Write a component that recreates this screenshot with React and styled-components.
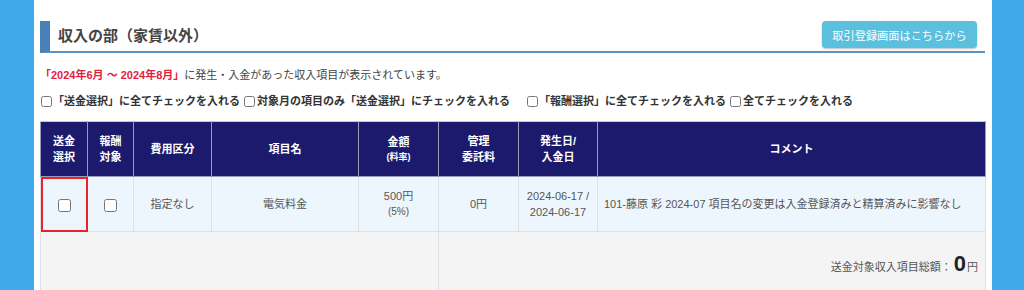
import React from "react";
import styled, { createGlobalStyle } from "styled-components";

const GlobalStyle = createGlobalStyle`
  html, body { margin: 0; padding: 0; }
  body {
    background: #3fa9eb;
    font-family: "Liberation Sans", "Noto Sans CJK JP", sans-serif;
    color: #555;
  }
`;

const Page = styled.div`
  margin: 0 32px 0 34px;
  background: #fff;
  padding: 21px 7px 0 6px;
  min-height: 290px;
  box-sizing: border-box;
`;

const SectionHeading = styled.div`
  display: flex;
  justify-content: space-between;
  align-items: center;
  height: 30px;
  border-left: 10px solid #4a80b8;
  border-bottom: 2px solid #5a92c8;
  padding: 0 8px 0 8px;
`;

const Title = styled.h2`
  margin: 0;
  font-size: 15px;
  font-weight: bold;
  color: #444;
  line-height: 32px;
`;

const LinkButton = styled.button`
  align-self: flex-start;
  height: 27px;
  width: 155px;
  border: none;
  border-radius: 4px;
  background: #5bc0de;
  color: #fff;
  font-family: inherit;
  font-size: 11.2px;
  box-shadow: 0 1px 2px rgba(0, 0, 0, 0.25);
  padding: 0;
  cursor: pointer;
`;

const Notice = styled.p`
  margin: 14px 0 0;
  font-size: 11px;
  line-height: 16px;
  color: #444;
`;

const Period = styled.span`
  color: #e2213f;
  font-weight: bold;
`;

const CheckRow = styled.div`
  display: flex;
  align-items: center;
  margin-top: 10px;
  font-size: 11px;
  line-height: 16px;
  font-weight: bold;
  color: #333;
`;

const CheckLabel = styled.label`
  display: inline-flex;
  align-items: center;
  margin-right: ${(p) => p.$gap || 3}px;
`;

const SmallBox = styled.input.attrs({ type: "checkbox" })`
  width: 11px;
  height: 11px;
  margin: 0 ${(p) => p.$after || 2}px 0 1px;
`;

const Table = styled.table`
  margin-top: 12px;
  width: 100%;
  border-collapse: collapse;
  table-layout: fixed;
  font-size: 11px;
`;

const Th = styled.th`
  background: #1b1a6c;
  color: #fff;
  font-weight: bold;
  height: 54px;
  padding: 0;
  line-height: 16px;
  border: 1px solid #9a9abb;
  border-top-color: #c9cad8;
  text-align: center;
`;

const Sub = styled.span`
  display: block;
  font-size: 9px;
  line-height: 14px;
`;

const Td = styled.td`
  background: #eef6fd;
  height: 54px;
  padding: 0 6px;
  text-align: ${(p) => p.$align || "center"};
  line-height: 16px;
  color: #555;
  border: 1px solid #dde1e5;
  ${(p) => p.$marked && "outline: 2px solid #e8232b; outline-offset: -2px;"}
`;

const Rate = styled.span`
  display: block;
  font-size: 10px;
`;

const FootTd = styled.td`
  background: #f4f4f4;
  height: 64px;
  border: 1px solid #dde1e5;
  border-bottom: none;
  padding: 0 7px 0 0;
  text-align: right;
  color: #555;
`;

const TotalLabel = styled.span`
  font-size: 11px;
`;

const TotalValue = styled.span`
  font-size: 22px;
  font-weight: bold;
  color: #222;
  margin: 0 1px 0 2px;
`;

const RowBox = styled.input.attrs({ type: "checkbox" })`
  width: 13px;
  height: 13px;
  margin: 0;
  vertical-align: middle;
`;

const cols = [47, 46, 78, 147, 80, 80, 79, 388];

export default function App() {
  return (
    <>
      <GlobalStyle />
      <Page>
        <SectionHeading>
          <Title>収入の部（家賃以外）</Title>
          <LinkButton>取引登録画面はこちらから</LinkButton>
        </SectionHeading>
        <Notice>
          <Period>「2024年6月 ～ 2024年8月」</Period>に発生・入金があった収入項目が表示されています。
        </Notice>
        <CheckRow>
          <CheckLabel>
            <SmallBox $after={1} />「送金選択」に全てチェックを入れる
          </CheckLabel>
          <CheckLabel $gap={16}>
            <SmallBox $after={0} />対象月の項目のみ「送金選択」にチェックを入れる
          </CheckLabel>
          <CheckLabel>
            <SmallBox $after={1} />「報酬選択」に全てチェックを入れる
          </CheckLabel>
          <CheckLabel>
            <SmallBox $after={0} />全てチェックを入れる
          </CheckLabel>
        </CheckRow>
        <Table>
          <colgroup>
            {cols.map((w, i) => (
              <col key={i} style={{ width: w }} />
            ))}
          </colgroup>
          <thead>
            <tr>
              <Th>送金<br />選択</Th>
              <Th>報酬<br />対象</Th>
              <Th>費用区分</Th>
              <Th>項目名</Th>
              <Th>金額<Sub>(料率)</Sub></Th>
              <Th>管理<br />委託料</Th>
              <Th>発生日/<br />入金日</Th>
              <Th>コメント</Th>
            </tr>
          </thead>
          <tbody>
            <tr>
              <Td $marked><RowBox /></Td>
              <Td><RowBox /></Td>
              <Td>指定なし</Td>
              <Td>電気料金</Td>
              <Td>500円<Rate>(5%)</Rate></Td>
              <Td>0円</Td>
              <Td>2024-06-17 /<br />2024-06-17</Td>
              <Td $align="left">101-藤原 彩 2024-07 項目名の変更は入金登録済みと精算済みに影響なし</Td>
            </tr>
            <tr>
              <FootTd colSpan={5} />
              <FootTd colSpan={3}>
                <TotalLabel>送金対象収入項目総額：</TotalLabel>
                <TotalValue>0</TotalValue>
                <TotalLabel>円</TotalLabel>
              </FootTd>
            </tr>
          </tbody>
        </Table>
      </Page>
    </>
  );
}
